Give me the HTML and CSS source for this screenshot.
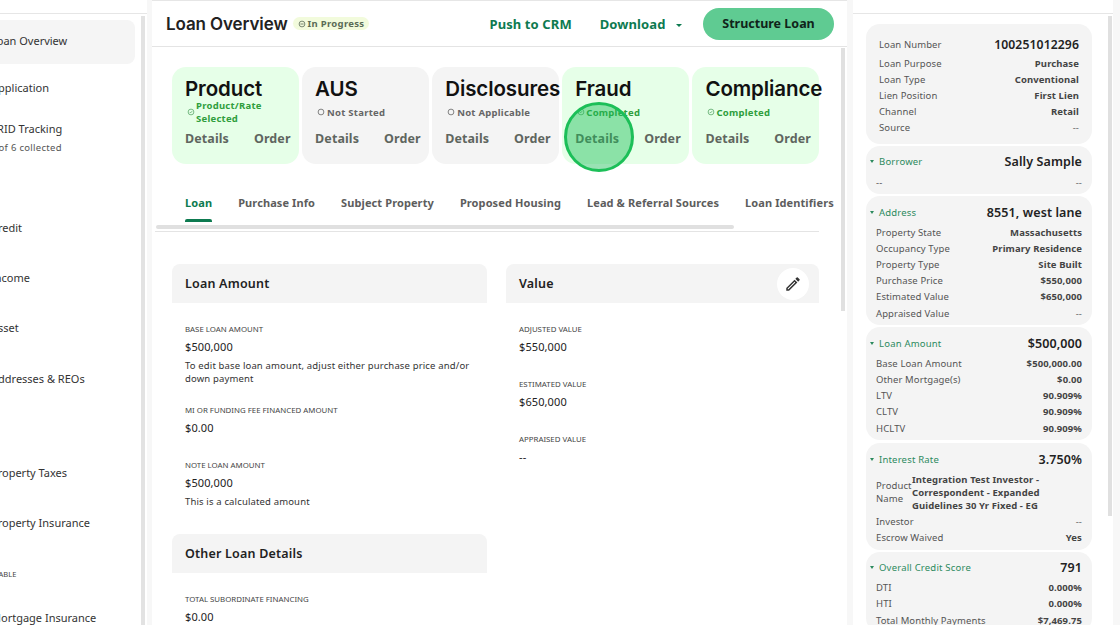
FILE: index.html
```html
<!DOCTYPE html>
<html lang="en">
<head>
    <meta charset="UTF-8">
    <meta name="viewport" content="width=device-width, initial-scale=1.0">
    <title>Loan Overview</title>
    <link rel="stylesheet" href="styles.css">
</head>
<body>
    <div class="app">
        <aside class="side-nav">
            <div class="nav-scroll">
                <ul class="nav-list">
                    <li class="nav-item active n-overview">Loan Overview</li>
                    <li class="nav-item n-application">Application</li>
                    <li class="nav-item n-trid">TRID Tracking<span class="nav-sub">3 of 6 collected</span></li>
                    <li class="nav-item n-credit">Credit</li>
                    <li class="nav-item n-income">Income</li>
                    <li class="nav-item n-asset">Asset</li>
                    <li class="nav-item n-addresses">Addresses &amp; REOs</li>
                    <li class="nav-item n-taxes">Property Taxes</li>
                    <li class="nav-item n-insurance">Property Insurance</li>
                    <li class="nav-label">NOT APPLICABLE</li>
                    <li class="nav-item n-mortgage">Mortgage Insurance</li>
                </ul>
            </div>
            <div class="nav-scrollbar"></div>
        </aside>

        <main class="main">
            <header class="top-bar">
                <h1>Loan Overview</h1>
                <span class="chip">
                    <svg class="status-icon" viewBox="0 0 10 10"><circle cx="5" cy="5" r="3.6"/><path d="M3 5h4"/></svg>
                    In Progress
                </span>
                <div class="top-actions">
                    <a class="top-link">Push to CRM</a>
                    <a class="top-link download">Download <span class="caret"></span></a>
                    <button class="primary-btn">Structure Loan</button>
                </div>
            </header>

            <div class="main-body">
                <div class="status-cards">
                    <div class="card done">
                        <h2>Product</h2>
                        <div class="status two-line">
                            <svg class="status-icon" viewBox="0 0 10 10"><circle cx="5" cy="5" r="3.6"/><path d="M3.4 5l1.1 1.1 2-2.2"/></svg>
                            <span>Product/Rate Selected</span>
                        </div>
                        <div class="card-actions"><span>Details</span><span>Order</span></div>
                    </div>
                    <div class="card">
                        <h2>AUS</h2>
                        <div class="status">
                            <svg class="status-icon" viewBox="0 0 10 10"><circle cx="5" cy="5" r="3.6"/></svg>
                            <span>Not Started</span>
                        </div>
                        <div class="card-actions"><span>Details</span><span>Order</span></div>
                    </div>
                    <div class="card">
                        <h2>Disclosures</h2>
                        <div class="status">
                            <svg class="status-icon" viewBox="0 0 10 10"><circle cx="5" cy="5" r="3.6"/></svg>
                            <span>Not Applicable</span>
                        </div>
                        <div class="card-actions"><span>Details</span><span>Order</span></div>
                    </div>
                    <div class="card done">
                        <h2>Fraud</h2>
                        <div class="status">
                            <svg class="status-icon" viewBox="0 0 10 10"><circle cx="5" cy="5" r="3.6"/><path d="M3.4 5l1.1 1.1 2-2.2"/></svg>
                            <span>Completed</span>
                        </div>
                        <div class="card-actions"><span>Details</span><span>Order</span></div>
                    </div>
                    <div class="card done">
                        <h2>Compliance</h2>
                        <div class="status">
                            <svg class="status-icon" viewBox="0 0 10 10"><circle cx="5" cy="5" r="3.6"/><path d="M3.4 5l1.1 1.1 2-2.2"/></svg>
                            <span>Completed</span>
                        </div>
                        <div class="card-actions"><span>Details</span><span>Order</span></div>
                    </div>
                </div>

                <nav class="tabs">
                    <span class="tab active">Loan</span>
                    <span class="tab">Purchase Info</span>
                    <span class="tab">Subject Property</span>
                    <span class="tab">Proposed Housing</span>
                    <span class="tab">Lead &amp; Referral Sources</span>
                    <span class="tab">Loan Identifiers</span>
                </nav>
                <div class="tabs-scroll"></div>

                <div class="sections">
                    <div class="section-col left-col">
                        <section class="section">
                            <div class="section-head"><h3>Loan Amount</h3></div>
                            <div class="field">
                                <label>BASE LOAN AMOUNT</label>
                                <div class="value">$500,000</div>
                                <p class="hint">To edit base loan amount, adjust either purchase price and/or down payment</p>
                            </div>
                            <div class="field">
                                <label>MI OR FUNDING FEE FINANCED AMOUNT</label>
                                <div class="value">$0.00</div>
                            </div>
                            <div class="field">
                                <label>NOTE LOAN AMOUNT</label>
                                <div class="value">$500,000</div>
                                <p class="hint">This is a calculated amount</p>
                            </div>
                        </section>
                        <section class="section">
                            <div class="section-head"><h3>Other Loan Details</h3></div>
                            <div class="field">
                                <label>TOTAL SUBORDINATE FINANCING</label>
                                <div class="value">$0.00</div>
                            </div>
                        </section>
                    </div>
                    <div class="section-col right-col">
                        <section class="section">
                            <div class="section-head">
                                <h3>Value</h3>
                                <button class="edit-btn" aria-label="Edit">
                                    <svg viewBox="0 0 24 24"><path d="M3 17.25V21h3.75L17.81 9.94l-3.75-3.75L3 17.25zM5.92 19H5v-.92l9.06-9.06.92.92L5.92 19zM20.71 7.04a1 1 0 0 0 0-1.41l-2.34-2.34a1 1 0 0 0-1.41 0l-1.83 1.83 3.75 3.75 1.83-1.83z"/></svg>
                                </button>
                            </div>
                            <div class="field">
                                <label>ADJUSTED VALUE</label>
                                <div class="value">$550,000</div>
                            </div>
                            <div class="field">
                                <label>ESTIMATED VALUE</label>
                                <div class="value">$650,000</div>
                            </div>
                            <div class="field">
                                <label>APPRAISED VALUE</label>
                                <div class="value">--</div>
                            </div>
                        </section>
                    </div>
                </div>
            </div>
            <div class="main-scrollbar"></div>
        </main>

        <aside class="summary">
            <div class="summary-scroll">
                <div class="s-card first">
                    <div class="s-row head"><span>Loan Number</span><b>100251012296</b></div>
                    <div class="s-row"><span>Loan Purpose</span><b>Purchase</b></div>
                    <div class="s-row"><span>Loan Type</span><b>Conventional</b></div>
                    <div class="s-row"><span>Lien Position</span><b>First Lien</b></div>
                    <div class="s-row"><span>Channel</span><b>Retail</b></div>
                    <div class="s-row"><span>Source</span><b class="light">--</b></div>
                </div>
                <div class="s-card">
                    <div class="s-row head"><span class="s-title">Borrower</span><b>Sally Sample</b></div>
                    <div class="s-row"><span>--</span><b class="light">--</b></div>
                </div>
                <div class="s-card">
                    <div class="s-row head"><span class="s-title">Address</span><b>8551, west lane</b></div>
                    <div class="s-row"><span>Property State</span><b>Massachusetts</b></div>
                    <div class="s-row"><span>Occupancy Type</span><b>Primary Residence</b></div>
                    <div class="s-row"><span>Property Type</span><b>Site Built</b></div>
                    <div class="s-row"><span>Purchase Price</span><b>$550,000</b></div>
                    <div class="s-row"><span>Estimated Value</span><b>$650,000</b></div>
                    <div class="s-row"><span>Appraised Value</span><b class="light">--</b></div>
                </div>
                <div class="s-card">
                    <div class="s-row head"><span class="s-title">Loan Amount</span><b>$500,000</b></div>
                    <div class="s-row"><span>Base Loan Amount</span><b>$500,000.00</b></div>
                    <div class="s-row"><span>Other Mortgage(s)</span><b>$0.00</b></div>
                    <div class="s-row"><span>LTV</span><b>90.909%</b></div>
                    <div class="s-row"><span>CLTV</span><b>90.909%</b></div>
                    <div class="s-row"><span>HCLTV</span><b>90.909%</b></div>
                </div>
                <div class="s-card rate">
                    <div class="s-row head"><span class="s-title">Interest Rate</span><b>3.750%</b></div>
                    <div class="s-row product"><span>Product Name</span><b>Integration Test Investor - Correspondent - Expanded Guidelines 30 Yr Fixed - EG</b></div>
                    <div class="s-row"><span>Investor</span><b class="light">--</b></div>
                    <div class="s-row"><span>Escrow Waived</span><b>Yes</b></div>
                </div>
                <div class="s-card">
                    <div class="s-row head"><span class="s-title">Overall Credit Score</span><b>791</b></div>
                    <div class="s-row"><span>DTI</span><b>0.000%</b></div>
                    <div class="s-row"><span>HTI</span><b>0.000%</b></div>
                    <div class="s-row"><span>Total Monthly Payments</span><b>$7,469.75</b></div>
                </div>
            </div>
            <div class="summary-scrollbar"></div>
        </aside>
    </div>

    <div class="click-marker"></div>
</body>
</html>
```

FILE: styles.css
```css
* {
    box-sizing: border-box;
}
html, body {
    height: 100%;
}
body {
    margin: 0;
    overflow: hidden;
    background-color: #f7f7f7;
    color: #222;
    font-family: "Noto Sans", "Open Sans", sans-serif;
}
.app {
    display: flex;
    height: 625px;
    overflow: hidden;
}

/* left nav, pushed partly off screen */
.side-nav {
    position: relative;
    flex: 0 0 147px;
    height: 100%;
    overflow: hidden;
    padding-top: 13px;
    background-color: #fff;
}
.nav-scroll {
    height: 100%;
    border-top: 1px solid #e6e6e6;
    overflow: hidden;
}
.nav-scrollbar {
    position: absolute;
    top: 16px;
    left: 141px;
    bottom: 0;
    width: 4px;
    background-color: #e2e2e2;
}
.nav-list {
    list-style: none;
    margin: 0;
    padding: 6px 0 0 0;
}
.nav-item {
    font-size: 11px;
    line-height: 16px;
    margin-left: -9px;
    white-space: nowrap;
    color: #333;
}
.nav-item.active {
    height: 44px;
    width: 144px;
    background-color: #f5f5f5;
    border-radius: 8px;
    line-height: 42px;
}
.nav-sub {
    display: block;
    font-size: 9.5px;
    line-height: 14px;
    margin-top: 4px;
    margin-left: -1px;
    letter-spacing: 0.3px;
    color: #555;
}
.n-application { margin-top: 16px; }
.n-trid { margin-top: 25px; }
.n-credit { margin-top: 65px; }
.n-income { margin-top: 34px; }
.n-asset { margin-top: 34px; }
.n-addresses { margin-top: 35px; }
.n-taxes { margin-top: 78px; }
.n-insurance { margin-top: 34px; }
.nav-label {
    font-size: 7.5px;
    line-height: 12px;
    margin-top: 37px;
    margin-left: -44px;
    white-space: nowrap;
    color: #444;
}
.n-mortgage { margin-top: 30px; }

/* center column */
.main {
    position: relative;
    flex: 0 0 695px;
    margin-left: 5px;
    background-color: #fff;
    border-top: 1px solid #e6e6e6;
    height: 100%;
    overflow: hidden;
}
.top-bar {
    display: flex;
    align-items: center;
    height: 46px;
    padding: 0 13px 0 14px;
    border-bottom: 1px solid #e4e4e4;
}
.top-bar h1 {
    margin: 0;
    font-family: Inter, "Noto Sans", sans-serif;
    font-size: 17px;
    font-weight: 600;
    letter-spacing: -0.1px;
    color: #222;
}
.chip {
    display: flex;
    align-items: center;
    gap: 2px;
    margin-left: 5px;
    padding: 0 5px;
    height: 13px;
    border-radius: 7px;
    background-color: #f2fbdc;
    font-size: 9.5px;
    font-weight: 700;
    letter-spacing: 0.3px;
    color: #5a6b55;
}
.chip .status-icon {
    stroke: #5a6b55;
}
.status-icon {
    flex: none;
    width: 8px;
    height: 8px;
    fill: none;
    stroke: #666;
    stroke-width: 1;
}
.top-actions {
    display: flex;
    align-items: center;
    margin-left: auto;
}
.top-link {
    font-size: 13px;
    font-weight: 700;
    letter-spacing: 0.1px;
    color: #0d7a50;
    margin-right: 28px;
}
.download {
    margin-right: 21px;
}
.caret {
    display: inline-block;
    width: 0;
    height: 0;
    margin-left: 7px;
    vertical-align: 2px;
    border-left: 3px solid transparent;
    border-right: 3px solid transparent;
    border-top: 3px solid #0d7a50;
}
.primary-btn {
    width: 131px;
    height: 32px;
    border: none;
    border-radius: 16px;
    background-color: #5fcb92;
    color: #10241a;
    font-family: inherit;
    font-size: 12.5px;
    font-weight: 700;
}
.main-body {
    padding: 20px 20px 0 20px;
}
.status-cards {
    display: grid;
    grid-template-columns: repeat(5, 126.6px);
    column-gap: 3.5px;
}
.card {
    height: 97px;
    padding: 8px 8px 0 13px;
    border-radius: 14px;
    background-color: #f4f4f4;
    display: flex;
    flex-direction: column;
}
.card.done {
    background-color: #e6ffe8;
}
.card h2 {
    margin: 0;
    font-family: Inter, "Noto Sans", sans-serif;
    font-size: 20.5px;
    line-height: 28px;
    font-weight: 600;
    letter-spacing: -0.1px;
    white-space: nowrap;
    color: #111;
}
.status {
    display: flex;
    align-items: center;
    gap: 2px;
    height: 18px;
    padding-left: 2px;
    font-size: 9.5px;
    line-height: 13px;
    font-weight: 700;
    letter-spacing: 0.25px;
    color: #666;
}
.done .status {
    gap: 1px;
    color: #2f9e3d;
}
.done .status-icon {
    stroke: #5aa86a;
}
.card-actions {
    display: flex;
    justify-content: space-between;
    margin-top: 9px;
    font-size: 12.5px;
    line-height: 18px;
    font-weight: 700;
    letter-spacing: 0.1px;
    color: #5f665f;
}
.tabs {
    display: flex;
    gap: 26px;
    margin-top: 26px;
    padding-left: 13px;
    height: 36px;
    white-space: nowrap;
}
.tab {
    position: relative;
    font-size: 11px;
    line-height: 26px;
    font-weight: 700;
    letter-spacing: 0.1px;
    color: #5d5d5d;
}
.tab.active {
    color: #0d7a50;
}
.tab.active::after {
    content: "";
    position: absolute;
    left: 0;
    right: 0;
    top: 29px;
    height: 3px;
    border-radius: 2px 2px 0 0;
    background-color: #0d7a50;
}
.tabs-scroll {
    width: 578px;
    height: 4px;
    margin: -1px 0 0 -16px;
    border-radius: 2px;
    background-color: #e0e0e0;
}
.sections {
    display: flex;
    gap: 19px;
    margin-top: 2px;
    padding-top: 32px;
    margin-left: -17px;
    margin-right: 8px;
    padding-left: 17px;
    border-top: 1px solid #e4e4e4;
}
.left-col {
    flex: 0 0 315px;
}
.right-col {
    flex: 0 0 313px;
}
.section {
    margin-bottom: 30px;
}
.section-head {
    display: flex;
    align-items: center;
    justify-content: space-between;
    height: 39px;
    padding: 0 10px 0 13px;
    border-radius: 8px 8px 0 0;
    background-color: #f4f4f4;
}
.section-head h3 {
    margin: 0;
    font-size: 12.5px;
    font-weight: 600;
    letter-spacing: 0.2px;
    color: #222;
}
.edit-btn {
    width: 32px;
    height: 32px;
    padding: 7px;
    border: none;
    border-radius: 50%;
    background-color: #fff;
}
.edit-btn svg {
    display: block;
    width: 18px;
    height: 18px;
    fill: #333;
}
.field {
    padding: 21px 13px 0 13px;
}
.field + .field {
    padding-top: 24px;
}
.field label {
    display: block;
    font-size: 7.85px;
    line-height: 11px;
    color: #444;
}
.value {
    margin-top: 4px;
    font-size: 11px;
    line-height: 16px;
    letter-spacing: 0.1px;
    color: #222;
}
.hint {
    margin: 4px 0 -4px 0;
    font-size: 9.5px;
    line-height: 13px;
    letter-spacing: 0.15px;
    color: #333;
}

.main-scrollbar {
    position: absolute;
    top: 47px;
    right: 2px;
    width: 4px;
    height: 263px;
    background-color: #e0e0e0;
}

/* right summary */
.summary {
    position: relative;
    flex: 0 0 260px;
    margin-left: 6px;
    padding-top: 13px;
    height: 100%;
    background-color: #fff;
}
.summary-scroll {
    height: 100%;
    padding: 10px 0 0 13px;
    border-top: 1px solid #e6e6e6;
    overflow: hidden;
}
.summary-scrollbar {
    position: absolute;
    top: 16px;
    left: 255px;
    width: 4px;
    height: 500px;
    background-color: #e0e0e0;
}
.s-card {
    width: 226px;
    margin-bottom: 2px;
    padding: 4px 10px 4px 10px;
    border-radius: 14px;
    background-color: #f4f4f4;
}
.s-card.first {
    padding: 9px 13px 8px 13px;
}
.s-card.rate {
    margin-top: 3px;
}
.s-row {
    display: flex;
    justify-content: space-between;
    align-items: center;
    height: 16.2px;
    font-size: 9.5px;
    letter-spacing: 0.1px;
    color: #555;
    white-space: nowrap;
}
.s-row b {
    font-weight: 700;
    color: #444;
}
.s-row b.light {
    font-weight: 400;
    color: #666;
}
.s-row.head {
    height: 24px;
}
.first .s-row.head {
    height: 22px;
}
.s-row.head b {
    font-size: 12.5px;
    font-weight: 600;
    color: #222;
}
.first .s-row.head b {
    font-size: 12.2px;
}
.s-title {
    position: relative;
    margin-left: 3px;
    letter-spacing: 0.2px;
    color: #2c8a5e;
}
.s-title::before {
    content: "";
    position: absolute;
    left: -9px;
    top: 5px;
    border-left: 2.5px solid transparent;
    border-right: 2.5px solid transparent;
    border-top: 3px solid #2c8a5e;
}
.s-row.product {
    height: auto;
    justify-content: flex-start;
    padding: 1.5px 0;
}
.s-row.product span {
    flex: none;
    width: 36px;
    white-space: normal;
    line-height: 13px;
}
.s-row.product b {
    white-space: normal;
    line-height: 13px;
    width: 145px;
}

.click-marker {
    position: absolute;
    left: 564px;
    top: 102px;
    width: 70px;
    height: 70px;
    border: 3px solid #1cbf58;
    border-radius: 50%;
    background-color: rgba(28, 191, 88, 0.45);
}
```
